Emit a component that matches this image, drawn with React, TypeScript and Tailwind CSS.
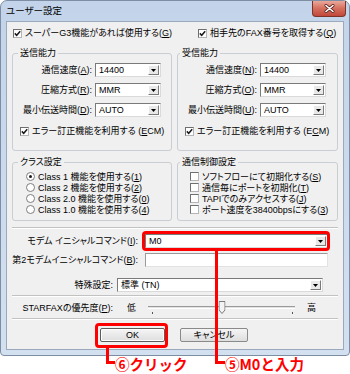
import React from 'react';

// underlined access key
const K = ({ c }: { c: string }) => (
  <span className="underline decoration-1 underline-offset-[1px]">{c}</span>
);

const Check = ({ checked = false }: { checked?: boolean }) => (
  <span className="inline-flex h-[9px] w-[9px] shrink-0 items-center justify-center border border-t-[#6f6f6f] border-l-[#6f6f6f] border-r-[#b5b5b5] border-b-[#b5b5b5] bg-white">
    {checked && (
      <svg width="7" height="7" viewBox="0 0 7 7">
        <path d="M0.8 3.4 L2.7 5.3 L6.2 1.3" fill="none" stroke="#1a1a1a" strokeWidth="1.5" />
      </svg>
    )}
  </span>
);

const Radio = ({ checked = false }: { checked?: boolean }) => (
  <span className="inline-flex h-[9px] w-[9px] shrink-0 items-center justify-center rounded-full border border-[#7e7e7e] bg-white">
    {checked && <span className="h-[3px] w-[3px] rounded-full bg-[#1a1a1a]" />}
  </span>
);

const DropBtn = () => (
  <span className="m-[1px] flex w-[11px] shrink-0 items-center justify-center border border-t-white border-l-white border-b-[#7a7a7a] border-r-[#7a7a7a] bg-[#e9e9e9]">
    <svg width="5" height="3" viewBox="0 0 5 3">
      <path d="M0 0H5L2.5 3Z" fill="#000" />
    </svg>
  </span>
);

const Select = ({ value, className }: { value: string; className: string }) => (
  <div
    className={`flex h-[14px] shrink-0 items-stretch border border-t-[#7a7a7a] border-l-[#7a7a7a] border-r-[#dadada] border-b-[#dadada] bg-white ${className}`}
  >
    <span className="flex-1 truncate pl-[3px] leading-[12px]">{value}</span>
    <DropBtn />
  </div>
);

const Group = ({
  title,
  className,
  legendClass,
  children,
}: {
  title: string;
  className: string;
  legendClass: string;
  children: React.ReactNode;
}) => (
  <fieldset className={`shrink-0 rounded-[3px] border border-[#c8ced4] ${className}`}>
    <legend className={`px-[2px] leading-[12px] ${legendClass}`}>{title}</legend>
    {children}
  </fieldset>
);

const Row = ({ label, value }: { label: React.ReactNode; value: string }) => (
  <div className="flex h-[14px] items-center">
    <span className="w-[79px] whitespace-nowrap text-right">{label}</span>
    <Select value={value} className="ml-[3px] w-[66px]" />
  </div>
);

const Etched = () => <div className="mx-[5px] h-[2px] border-t border-t-[#c2c2c2] border-b border-b-white" />;

export default function App() {
  return (
    <div className="relative h-[374px] w-[350px] overflow-hidden bg-white font-['Liberation_Sans','Noto_Sans_CJK_JP',sans-serif] text-[9px] leading-[11px] text-black [font-feature-settings:'palt']">
      {/* window frame */}
      <div className="flex h-[356px] w-[350px] flex-col rounded-t-[7px] rounded-b-[4px] border border-[#7d8ea4] bg-gradient-to-b from-[#c3d4ea] to-[#d3e0f0] px-[5px] pb-[5px]">
        {/* title bar */}
        <div className="flex h-[20px] items-center">
          <span className="text-[9.5px] leading-[12px]">ユーザー設定</span>
          <span className="-mr-[2px] ml-auto flex h-[16px] w-[34px] items-center justify-center self-start rounded-b-[4px] border border-t-0 border-[#7c3328] bg-gradient-to-b from-[#eaa89c] via-[#d46e5d] to-[#c0473a]">
            <svg width="11" height="9" viewBox="0 0 11 9">
              <path d="M2 1.5 L9 7.5 M9 1.5 L2 7.5" stroke="#5a2520" strokeWidth="3" strokeLinecap="round" />
              <path d="M2 1.5 L9 7.5 M9 1.5 L2 7.5" stroke="#fff" strokeWidth="1.6" strokeLinecap="round" />
            </svg>
          </span>
        </div>

        {/* client area */}
        <div className="flex-1 border border-[#9aa9bb] bg-[#f0f0f0] pt-[5px]">
          {/* top checkboxes */}
          <div className="flex h-[12px] items-center pl-[6px]">
            <label className="flex w-[185px] items-center gap-[3px] whitespace-nowrap">
              <Check checked />
              <span>
                スーパーG3機能があれば使用する(<K c="G" />)
              </span>
            </label>
            <label className="flex items-center gap-[3px] whitespace-nowrap">
              <Check checked />
              <span>
                相手先のFAX番号を取得する(<K c="Q" />)
              </span>
            </label>
          </div>

          {/* send / receive */}
          <div className="mt-[8px] flex gap-[5px] pl-[5px]">
            <Group title="送信能力" className="h-[104px] w-[160px]" legendClass="ml-[5px]">
              <div className="mt-[4px] flex flex-col gap-[6px]">
                <Row label={<>通信速度(<K c="A" />):</>} value="14400" />
                <Row label={<>圧縮方式(<K c="R" />):</>} value="MMR" />
                <Row label={<>最小伝送時間(<K c="D" />):</>} value="AUTO" />
              </div>
              <label className="mt-[8px] flex h-[12px] items-center gap-[3px] whitespace-nowrap pl-[7px]">
                <Check checked />
                <span>
                  エラー訂正機能を利用する (<K c="E" />CM)
                </span>
              </label>
            </Group>
            <Group title="受信能力" className="h-[104px] w-[161px]" legendClass="ml-[2px]">
              <div className="mt-[4px] flex flex-col gap-[6px]">
                <Row label={<>通信速度(<K c="N" />):</>} value="14400" />
                <Row label={<>圧縮方式(<K c="O" />):</>} value="MMR" />
                <Row label={<>最小伝送時間(<K c="U" />):</>} value="AUTO" />
              </div>
              <label className="mt-[8px] flex h-[12px] items-center gap-[3px] whitespace-nowrap pl-[7px]">
                <Check checked />
                <span>
                  エラー訂正機能を利用する (E<K c="C" />M)
                </span>
              </label>
            </Group>
          </div>

          {/* class / control */}
          <div className="mt-[5px] flex gap-[5px] pl-[5px]">
            <Group title="クラス設定" className="h-[65px] w-[160px]" legendClass="ml-[5px]">
              <div className="mt-[3px] flex flex-col">
                {[
                  ['Class 1 機能を使用する(', '1', true],
                  ['Class 2 機能を使用する(', '2', false],
                  ['Class 2.0 機能を使用する(', '0', false],
                  ['Class 1.0 機能を使用する(', '4', false],
                ].map(([t, k, on]) => (
                  <label key={t as string} className="flex h-[11px] items-center gap-[3px] whitespace-nowrap pl-[13px]">
                    <Radio checked={on as boolean} />
                    <span className="leading-[10px]">
                      {t as string}
                      <K c={k as string} />)
                    </span>
                  </label>
                ))}
              </div>
            </Group>
            <Group title="通信制御設定" className="h-[65px] w-[161px]" legendClass="ml-[2px]">
              <div className="mt-[3px] flex flex-col">
                {[
                  ['ソフトフローにて初期化する(', 'S'],
                  ['通信毎にポートを初期化(', 'T'],
                  ['TAPIでのみアクセスする(', 'J'],
                  ['ポート速度を38400bpsにする(', '3'],
                ].map(([t, k]) => (
                  <label key={t} className="flex h-[11px] items-center gap-[3px] whitespace-nowrap pl-[12px]">
                    <Check />
                    <span className="leading-[10px]">
                      {t}
                      <K c={k} />)
                    </span>
                  </label>
                ))}
              </div>
            </Group>
          </div>

          <div className="mt-[6px]">
            <Etched />
          </div>

          {/* modem commands */}
          <div className="mt-[5px] flex h-[14px] items-center">
            <span className="w-[131px] whitespace-nowrap text-right">
              モデム イニシャルコマンド(<K c="I" />):
            </span>
            <Select value="M0" className="ml-[7px] w-[183px]" />
          </div>
          <div className="mt-[5px] flex h-[14px] items-center">
            <span className="w-[131px] whitespace-nowrap text-right">
              第2モデムイニシャルコマンド(<K c="B" />):
            </span>
            <div className="ml-[7px] h-[14px] w-[183px] border border-t-[#9a9a9a] border-l-[#9a9a9a] border-r-[#e2e2e2] border-b-[#e2e2e2] bg-white" />
          </div>
          <div className="mt-[11px] flex h-[14px] items-center">
            <span className="w-[106px] whitespace-nowrap text-right">特殊設定:</span>
            <Select value="標準 (TN)" className="ml-[4px] w-[206px]" />
          </div>

          <div className="mt-[3px]">
            <Etched />
          </div>

          {/* priority slider */}
          <div className="mt-[4px] flex h-[14px] items-center">
            <span className="w-[106px] whitespace-nowrap text-right">
              STARFAXの優先度(<K c="P" />):
            </span>
            <span className="ml-[14px]">低</span>
            <div className="relative ml-[12px] h-[14px] w-[147px] pt-[5px]">
              <div className="h-[3px] border-t border-t-[#9a9a9a] border-b border-b-white bg-[#e2e2e2]" />
              <span className="absolute left-[4px] top-[11px] h-[2px] w-px bg-[#555]" />
              <span className="absolute right-[2px] top-[11px] h-[2px] w-px bg-[#555]" />
              <svg className="absolute left-1/2 top-0 -translate-x-1/2" width="7" height="13" viewBox="0 0 7 13">
                <path d="M0.5 0.5 H6.5 V9 L3.5 12.5 L0.5 9 Z" fill="#f3f3f3" stroke="#7a7a7a" />
              </svg>
            </div>
            <span className="ml-[12px]">高</span>
          </div>

          <div className="mt-[3px]">
            <Etched />
          </div>

          {/* buttons */}
          <div className="mt-[8px] flex h-[14px] gap-[15px] pl-[93px]">
            <button className="flex w-[65px] items-center justify-center rounded-[2px] border border-[#5c5c5c] bg-gradient-to-b from-[#f5f5f5] to-[#dedede] leading-[12px] shadow-[inset_0_0_0_1px_#fff]">
              OK
            </button>
            <button className="flex w-[68px] items-center justify-center rounded-[2px] border border-[#8a8a8a] bg-gradient-to-b from-[#f5f5f5] to-[#dedede] leading-[12px]">
              キャンセル
            </button>
          </div>
        </div>
      </div>

      {/* callouts */}
      <div className="absolute left-[142px] top-[231px] h-[20px] w-[188px] rounded-[4px] border-[3px] border-[#ff0000]" />
      <div className="absolute left-[215px] top-[251px] h-[113px] w-[10px] border-l-[3px] border-b-[3px] border-[#ff0000]" />
      <span className="absolute left-[225px] top-[355px] whitespace-nowrap font-['Noto_Sans_CJK_JP',sans-serif] text-[14.5px] font-bold leading-[18px] text-[#ff0000] [font-feature-settings:normal]">
        ⑤M0と入力
      </span>

      <div className="absolute left-[95px] top-[323px] h-[25px] w-[73px] rounded-[4px] border-[3px] border-[#ff0000]" />
      <div className="absolute left-[106px] top-[348px] h-[16px] w-[9px] border-l-[3px] border-b-[3px] border-[#ff0000]" />
      <span className="absolute left-[115px] top-[355px] whitespace-nowrap font-['Noto_Sans_CJK_JP',sans-serif] text-[14.5px] font-bold leading-[18px] text-[#ff0000] [font-feature-settings:normal]">
        ⑥クリック
      </span>
    </div>
  );
}
